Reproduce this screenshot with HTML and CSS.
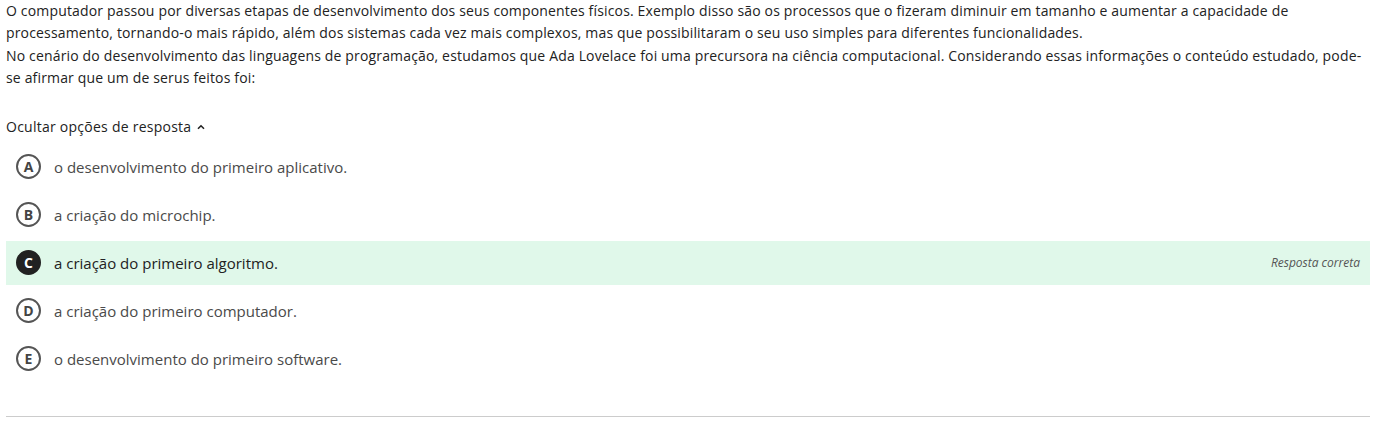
FILE: index.html
```html
<!DOCTYPE html>
<html lang="pt-BR">
<head>
<meta charset="utf-8">
<link rel="stylesheet" href="styles.css">
</head>
<body>
<div class="question">
  <p class="statement">O computador passou por diversas etapas de desenvolvimento dos seus componentes físicos. Exemplo disso são os processos que o fizeram diminuir em tamanho e aumentar a capacidade de processamento, tornando-o mais rápido, além dos sistemas cada vez mais complexos, mas que possibilitaram o seu uso simples para diferentes funcionalidades.<br>No cenário do desenvolvimento das linguagens de programação, estudamos que Ada Lovelace foi uma precursora na ciência computacional. Considerando essas informações o conteúdo estudado, pode-se afirmar que um de serus feitos foi:</p>
  <div class="toggle">Ocultar opções de resposta <svg class="chev" width="8" height="6" viewBox="0 0 8 6"><path d="M1 4.8 L4 1.8 L7 4.8" fill="none" stroke="#222" stroke-width="1.6"/></svg></div>
  <ul class="options">
    <li class="option"><span class="badge">A</span><span class="text">o desenvolvimento do primeiro aplicativo.</span></li>
    <li class="option"><span class="badge">B</span><span class="text">a criação do microchip.</span></li>
    <li class="option correct"><span class="badge">C</span><span class="text">a criação do primeiro algoritmo.</span><span class="note">Resposta correta</span></li>
    <li class="option"><span class="badge">D</span><span class="text">a criação do primeiro computador.</span></li>
    <li class="option"><span class="badge">E</span><span class="text">o desenvolvimento do primeiro software.</span></li>
  </ul>
  <hr class="divider">
</div>
</body>
</html>
```
FILE: styles.css
```css
html, body { margin: 0; padding: 0; background: #fff; }
body { font-family: "Open Sans", "Noto Sans", sans-serif; color: #222; }
.question { padding: 0 6px 0 6px; }
.statement { margin: 0; font-size: 14px; letter-spacing: 0.16px; line-height: 22.4px; color: #222; }
.toggle { margin-top: 27px; font-size: 14px; letter-spacing: 0.25px; line-height: 20px; color: #222; display: flex; align-items: center; gap: 6px; }
.chev { display: block; margin-top: 1px; }
.options { list-style: none; margin: 8px 0 0 0; padding: 0; display: flex; flex-direction: column; gap: 4px; }
.option { display: flex; align-items: center; height: 44px; padding: 0 10px 0 10px; font-size: 15px; color: #4a4a4a; }
.badge { width: 25px; height: 25px; box-sizing: border-box; border: 2px solid #555; border-radius: 50%; display: flex; align-items: center; justify-content: center; font-weight: 700; font-size: 14px; color: #444; margin-right: 13px; flex: none; }
.correct { background: #e0f8ea; color: #222; }
.correct .badge { background: #222; border-color: #222; color: #fff; }
.text { flex: 1; }
.note { font-style: italic; font-size: 12px; color: #555; }
.divider { border: 0; border-top: 1px solid #ccc; margin: 35px 0 0 0; }
```
